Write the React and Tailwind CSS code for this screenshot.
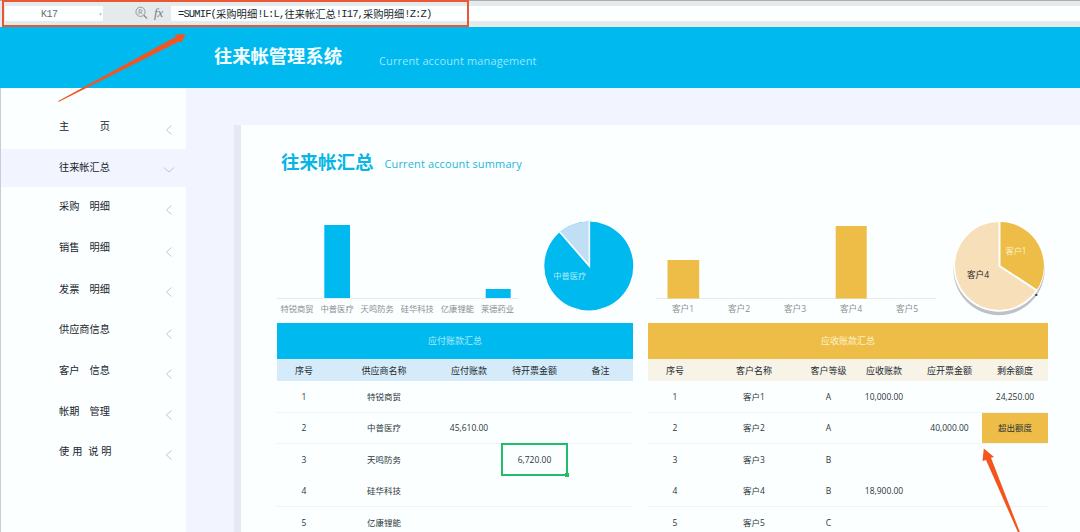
import React from "react";

const NAV = [
  { label: "主\u3000\u3000\u3000页", h: "h-[42px]", text: "-mt-1", chevron: "mt-[3px]" },
  { label: "往来帐汇总", h: "h-[38px]", text: "-mt-[3px]", chevron: "mt-[4px]", active: true },
  { label: "采购\u3000明细", h: "h-[40px]", text: "-mt-[2px]", chevron: "mt-[6px]" },
  { label: "销售\u3000明细", h: "h-[41px]", text: "-mt-[2px]", chevron: "mt-[9px]" },
  { label: "发票\u3000明细", h: "h-[41px]", text: "mt-px", chevron: "mt-[7px]" },
  { label: "供应商信息", h: "h-[41px]", text: "-mt-px", chevron: "mt-[9px]" },
  { label: "客户\u3000信息", h: "h-[41px]", text: "-mt-[2px]", chevron: "mt-[6px]" },
  { label: "帐期\u3000管理", h: "h-[40px]", text: "-mt-px", chevron: "mt-[8px]" },
  { label: "使 用  说 明", h: "h-[40px]", text: "-mt-px", chevron: "mt-[8px]" },
];

const PAYABLE_HEAD = ["序号", "供应商名称", "应付账款", "待开票金额", "备注"];
const PAYABLE = [
  ["1", "特锐商贸", "", "", ""],
  ["2", "中普医疗", "45,610.00", "", ""],
  ["3", "天鸣防务", "", "6,720.00", ""],
  ["4", "硅华科技", "", "", ""],
  ["5", "亿康锂能", "", "", ""],
];

const RECEIVABLE_HEAD = ["序号", "客户名称", "客户等级", "应收账款", "应开票金额", "剩余额度"];
const RECEIVABLE = [
  ["1", "客户1", "A", "10,000.00", "", "24,250.00"],
  ["2", "客户2", "A", "", "40,000.00", "超出额度"],
  ["3", "客户3", "B", "", "", ""],
  ["4", "客户4", "B", "18,900.00", "", ""],
  ["5", "客户5", "C", "", "", ""],
];

const FORMULA = ["=SUMIF(", "采购明细", "!L:L,", "往来帐汇总", "!I17,", "采购明细", "!Z:Z)"];

function FormulaBar() {
  return (
    <div className="flex h-[27px] items-start border-t border-[#a9afb3] bg-[#e5eaed] pt-[5px]">
      <div className="ml-[5px] flex h-[15px] w-[98px] items-center bg-[#fcffff] pl-[36px] pt-px font-['Liberation_Mono',monospace] text-[10px] tracking-[-0.5px] text-[#686c70]">
        K17
        <svg className="ml-auto mr-px h-[3px] w-[3px]" viewBox="0 0 4 3">
          <path d="M0 0H4L2 3Z" fill="#b3b8bc" />
        </svg>
      </div>
      <svg className="ml-[32px] h-[14px] w-[13px]" viewBox="0 0 13 14" fill="none" stroke="#8b9193">
        <circle cx="5.5" cy="5.8" r="4.6" strokeWidth="0.9" />
        <path d="M4 8.3V3.7H5.8C7.5 3.7 7.5 6.2 5.8 6.2H4M5.8 6.2L7.2 8.3" strokeWidth="0.8" />
        <path d="M8.8 9.2L12 12.5" strokeWidth="1.4" />
      </svg>
      <span className="-mt-[2px] ml-[6px] w-[17px] font-['Liberation_Serif',serif] text-[13px] italic leading-[17px] text-[#777d81]">
        fx
      </span>
      <div className="flex h-[15px] flex-1 items-center whitespace-pre bg-[#fcffff] pl-[7px] text-[#22282c]">
        {FORMULA.map((part, i) =>
          i % 2 ? (
            <span key={i} className="-mt-px font-['Noto_Sans_CJK_SC',sans-serif] text-[10.3px] leading-[15px]">{part}</span>
          ) : (
            <span key={i} className="mt-px font-['Liberation_Mono',monospace] text-[10.5px] leading-[15px] tracking-[-0.87px]">{part}</span>
          )
        )}
      </div>
    </div>
  );
}

function Sidebar() {
  return (
    <nav className="w-[186px] shrink-0 border-l border-[#c7cdd2] bg-[#fbffff] pt-[19px]">
      {NAV.map((item) => (
        <div
          key={item.label}
          className={`flex items-center pl-[58px] pr-[12px] text-[10.2px] text-[#20252c] ${item.h} ${
            item.active ? "bg-[#f2f5ff]" : ""
          }`}
        >
          <span className={`whitespace-pre leading-[14px] [word-spacing:0.3px] ${item.text}`}>{item.label}</span>
          <svg
            className={`ml-auto h-[10px] w-[10px] overflow-visible ${item.chevron}`}
            viewBox="0 0 10 10"
            fill="none"
            stroke="#c3c7cc"
          >
            <path d={item.active ? "M0 2.5L5 7L10 2.5" : "M7.5 0.5L2.5 5L7.5 9.5"} />
          </svg>
        </div>
      ))}
    </nav>
  );
}

function Charts() {
  const blue = ["特锐商贸", "中普医疗", "天鸣防务", "硅华科技", "亿康锂能", "莱德药业"];
  const gold = ["客户1", "客户2", "客户3", "客户4", "客户5"];
  return (
    <div className="flex h-[109px] gap-[15px]">
      <svg className="h-[109px] w-[356px] overflow-visible" viewBox="277 214 356 109" fontSize="8.3">
        <path d="M277 298.5H518" stroke="#e6eaed" />
        <rect x="324.3" y="225" width="25.7" height="73" fill="#00b9ef" />
        <rect x="485.7" y="289" width="25" height="9" fill="#00b9ef" />
        {blue.map((name, i) => (
          <text key={name} x={297 + i * 40.1} y="311.7" textAnchor="middle" fill="#8b8f93">{name}</text>
        ))}
        <circle cx="588.8" cy="266" r="44.5" fill="#00b9ef" />
        <path d="M588.8 266V221.5A44.5 44.5 0 0 0 559.8 232.2Z" fill="#c0dff4" />
        <path d="M589.3 221V266L559.8 232" fill="none" stroke="#fbffff" strokeWidth="1.7" />
        <text x="569.8" y="278.7" textAnchor="middle" fill="#a9ecfb">中普医疗</text>
      </svg>
      <svg className="h-[109px] w-[400px] overflow-visible" viewBox="648 214 400 109" fontSize="8.6">
        <path d="M656 298.5H936" stroke="#e6eaed" />
        <rect x="667.5" y="260" width="31.7" height="38.5" fill="#edbd47" />
        <rect x="835.7" y="226" width="31" height="72.5" fill="#edbd47" />
        {gold.map((name, i) => (
          <text key={name} x={683 + i * 56} y="311.7" textAnchor="middle" fill="#8b8f93">{name}</text>
        ))}
        <circle cx="999" cy="269.6" r="45.6" fill="#bfc1c8" />
        <circle cx="999" cy="266.2" r="45.6" fill="#fff" />
        <circle cx="999" cy="266" r="44" fill="#f7dfba" />
        <path d="M1000 266V222A44 44 0 0 1 1036.8 290Z" fill="#edbd47" />
        <path d="M999.5 221V266L1037 290.5" fill="none" stroke="#fbffff" strokeWidth="2" />
        <rect x="1035.3" y="294" width="2" height="2" fill="#30414f" />
        <text x="1016" y="253.5" textAnchor="middle" fill="#fff1cc" fontSize="8.2">客户1</text>
        <text x="978" y="277.5" textAnchor="middle" fill="#28231a">客户4</text>
      </svg>
    </div>
  );
}

function LedgerTable({ title, head, rows, cols, titleStyle, headStyle }) {
  return (
    <section>
      <h3 className={`flex h-[36px] items-center justify-center text-[9px] font-normal ${titleStyle}`}>{title}</h3>
      <div className={`grid h-[22px] items-center pt-px text-center text-[9px] text-[#222b31] ${cols} ${headStyle}`}>
        {head.map((name) => (
          <span key={name}>{name}</span>
        ))}
      </div>
      {rows.map((row, r) => (
        <div
          key={row[0]}
          className={`grid h-[31.5px] border-b text-[8.5px] text-[#2c363b] ${cols} ${
            r === 2 ? "border-transparent" : "border-[#f0f3f4]"
          }`}
        >
          {row.map((value, c) => (
            <div
              key={c}
              className={`relative flex items-center justify-center pt-[1.5px] ${
                value === "超出额度" ? "bg-[#edbd47]" : ""
              }`}
            >
              {value}
              {value === "6,720.00" && (
                <span className="absolute -top-px bottom-[-1px] left-0 right-0 border-2 border-[#21bd68]">
                  <span className="absolute -bottom-[3px] -right-[3px] h-[4px] w-[4px] bg-[#21bd68]" />
                </span>
              )}
            </div>
          ))}
        </div>
      ))}
    </section>
  );
}

export default function App() {
  return (
    <div className="relative h-[532px] w-[1080px] overflow-hidden bg-[#f2f5ff] font-['Open_Sans','Noto_Sans_CJK_SC',sans-serif]">
      <FormulaBar />
      <header className="flex h-[61px] items-center bg-[#00b9ef] pl-[214px]">
        <h1 className="-mt-[3px] text-[18.3px] font-bold leading-[24px] text-[#f2fdff]">往来帐管理系统</h1>
        <span className="ml-[37px] mt-[7px] text-[11px] tracking-[0.13px] text-[#9be7fb]">Current account management</span>
      </header>
      <div className="flex h-[444px]">
        <Sidebar />
        <main className="ml-[48px] mt-[37px] flex-1 border-l-[7px] border-[#e4e9f2] bg-[#fbffff] pl-[36px]">
          <div className="flex h-[89px] pl-[4px] pt-[24px]">
            <h2 className="text-[18.5px] font-bold leading-[26px] text-[#08b5e4]">往来帐汇总</h2>
            <span className="ml-[11px] mt-[7px] text-[11px] leading-[16px] tracking-[0.13px] text-[#1fb6dc]">
              Current account summary
            </span>
          </div>
          <Charts />
          <div className="flex gap-[15px]">
            <div className="w-[356px]">
              <LedgerTable
                title="应付账款汇总"
                head={PAYABLE_HEAD}
                rows={PAYABLE}
                cols="grid-cols-[54px_106px_64px_67px_65px]"
                titleStyle="bg-[#00b9ef] text-[#a5eafa]"
                headStyle="bg-[#d6ebfa]"
              />
            </div>
            <div className="w-[400px]">
              <LedgerTable
                title="应收账款汇总"
                head={RECEIVABLE_HEAD}
                rows={RECEIVABLE}
                cols="grid-cols-[54px_104px_45px_66px_65px_66px]"
                titleStyle="bg-[#edbd47] text-[#fff0c8]"
                headStyle="bg-[#f8f3e7]"
              />
            </div>
          </div>
        </main>
      </div>
      <div className="absolute left-[2px] top-0 h-[27px] w-[467px] border-2 border-[#ea5735]" />
      <svg className="absolute inset-0 h-[532px] w-[1080px]" viewBox="0 0 1080 532" fill="#f4551f">
        <path d="M57.8 101.2L176 36.8L175 34.8L185.5 34L181.5 42.5L179 41.5L59 101.8Z" />
        <path d="M983.8 448.5L994 457L991 457.8L1019.8 532H1017.8L986 460L982.5 461Z" />
      </svg>
    </div>
  );
}
